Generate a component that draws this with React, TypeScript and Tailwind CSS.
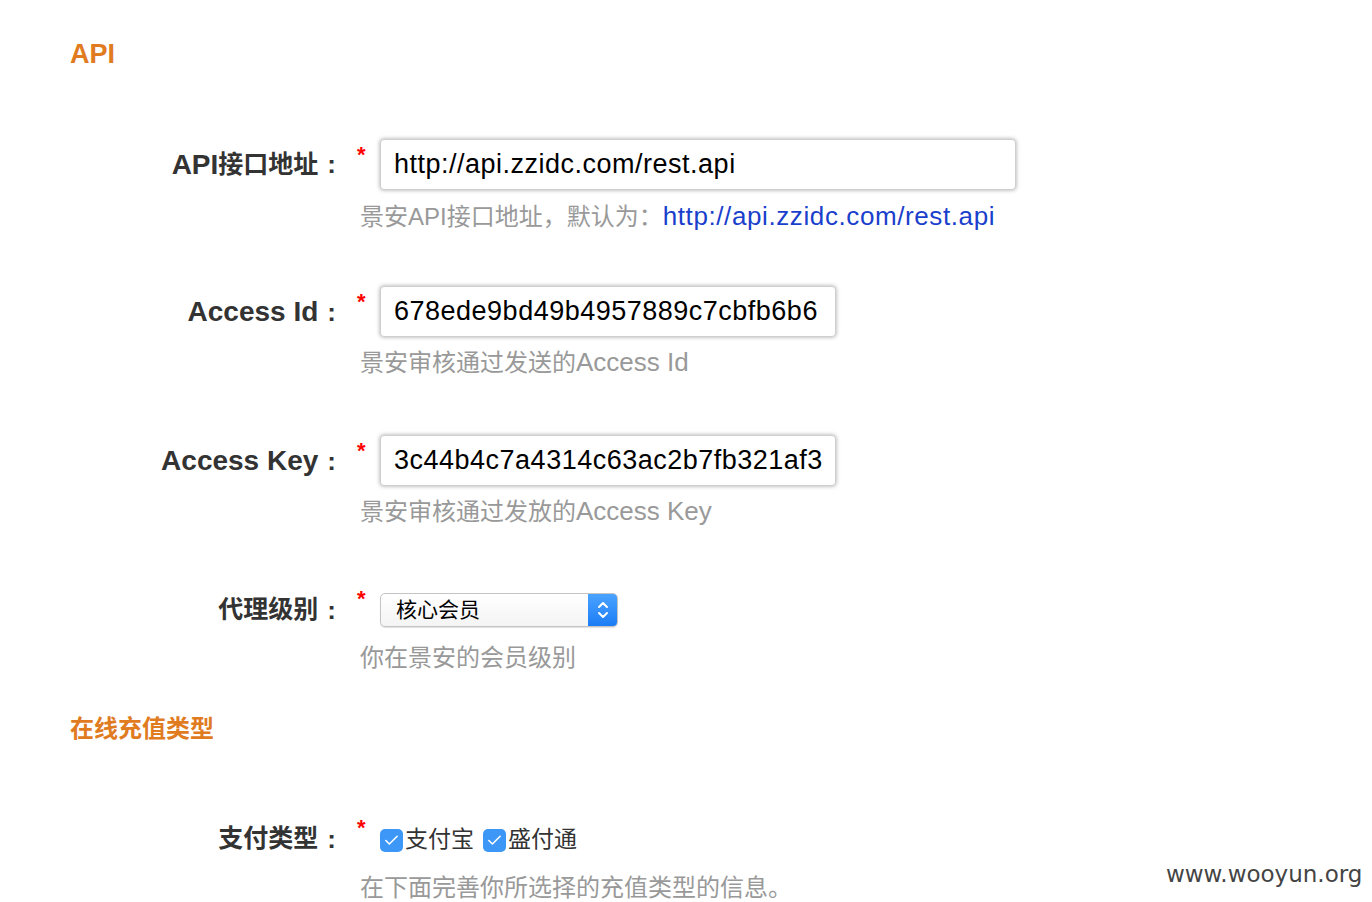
import { Check } from 'lucide-react';

const font = 'font-["Liberation_Sans","Noto_Sans_CJK_SC",sans-serif]';

const Star = ({ up }: { up?: boolean }) => (
  <span
    className={`w-[23px] shrink-0 text-[22px] font-bold leading-none text-[#ff0000] ${up ? '-mt-[5px]' : 'mt-[5px]'}`}
  >
    *
  </span>
);

const Help = ({ children }: { children: React.ReactNode }) => (
  <p className="pl-[3px] text-[24px] leading-[30px] text-[#999999]">{children}</p>
);

const TextInput = ({ value, width }: { value: string; width: string }) => (
  <input
    readOnly
    defaultValue={value}
    className={`${width} h-[51px] rounded-[4px] border border-[#cfcfcf] bg-white px-[13px] text-[27px] tracking-[0.5px] text-black shadow-[0_0_4px_rgba(0,0,0,0.35)] outline-none`}
  />
);

const Label = ({ latin, cjk, h }: { latin?: string; cjk?: string; h: string }) => (
  <div className={`flex w-[336px] shrink-0 items-center justify-end font-bold text-[#333333] ${h}`}>
    {latin && <span className="text-[28px]">{latin}</span>}
    {cjk && <span className="text-[25px]">{cjk}</span>}
    <span className="ml-[9px] text-[26px]">:</span>
  </div>
);

const CheckBox = ({ label }: { label: string }) => (
  <label className="flex items-center">
    <span className="mt-[3px] flex h-[23px] w-[23px] items-center justify-center rounded-[5px] bg-[#3d97f7]">
      <Check size={17} strokeWidth={2.2} className="text-white" />
    </span>
    <span className="ml-[2px] text-[23px] text-[#333333]">{label}</span>
  </label>
);

export default function App() {
  return (
    <div className={`relative min-h-[902px] bg-white ${font}`}>
      <div className="pt-[38px]">
        <h2 className="pl-[70px] text-[27px] font-bold leading-[32px] text-[#e07b1f]">API</h2>

        {/* API接口地址 */}
        <div className="mt-[69px] flex">
          <Label latin="API" cjk="接口地址" h="h-[51px]" />
          <div className="ml-[21px] flex flex-col">
            <div className="flex items-start">
              <Star />
              <TextInput value="http://api.zzidc.com/rest.api" width="w-[636px]" />
            </div>
            <div className="mt-[11px]">
              <Help>
                景安API接口地址，默认为：
                <a className="text-[26px] tracking-[0.6px] text-[#1a3fcc]">http://api.zzidc.com/rest.api</a>
              </Help>
            </div>
          </div>
        </div>

        {/* Access Id */}
        <div className="mt-[54px] flex">
          <Label latin="Access Id" h="h-[52px]" />
          <div className="ml-[21px] flex flex-col">
            <div className="flex items-start">
              <Star />
              <TextInput value="678ede9bd49b4957889c7cbfb6b6" width="w-[456px]" />
            </div>
            <div className="mt-[10px]">
              <Help>
                景安审核通过发送的<span className="text-[26px]">Access Id</span>
              </Help>
            </div>
          </div>
        </div>

        {/* Access Key */}
        <div className="mt-[57px] flex">
          <Label latin="Access Key" h="h-[52px]" />
          <div className="ml-[21px] flex flex-col">
            <div className="flex items-start">
              <Star />
              <TextInput value="3c44b4c7a4314c63ac2b7fb321af3e2d" width="w-[456px]" />
            </div>
            <div className="mt-[10px]">
              <Help>
                景安审核通过发放的<span className="text-[26px]">Access Key</span>
              </Help>
            </div>
          </div>
        </div>

        {/* 代理级别 */}
        <div className="mt-[66px] flex">
          <Label cjk="代理级别" h="h-[34px]" />
          <div className="ml-[21px] flex flex-col">
            <div className="flex items-start">
              <Star up />
              <div className="flex h-[34px] w-[238px] overflow-hidden rounded-[5px] border border-[#c4c4c4] bg-gradient-to-b from-white to-[#f4f4f4] shadow-[0_1px_1px_rgba(0,0,0,0.12)]">
                <span className="flex-1 pl-[15px] text-[21px] leading-[32px] text-black">核心会员</span>
                <span className="flex w-[29px] items-center justify-center bg-gradient-to-b from-[#4aa3ff] to-[#1a7cf5]">
                  <svg width="12" height="22" viewBox="0 0 12 22" fill="none" stroke="white" strokeWidth="2" strokeLinecap="round" strokeLinejoin="round">
                    <path d="M2 8 L6 4 L10 8" />
                    <path d="M2 14 L6 18 L10 14" />
                  </svg>
                </span>
              </div>
            </div>
            <div className="mt-[16px]">
              <Help>你在景安的会员级别</Help>
            </div>
          </div>
        </div>

        <h2 className="mt-[40px] pl-[70px] text-[24px] font-bold leading-[32px] text-[#e07b1f]">在线充值类型</h2>

        {/* 支付类型 */}
        <div className="mt-[77px] flex">
          <Label cjk="支付类型" h="h-[34px]" />
          <div className="ml-[21px] flex flex-col">
            <div className="flex items-start">
              <Star up />
              <div className="flex h-[34px] items-center gap-[9px]">
                <CheckBox label="支付宝" />
                <CheckBox label="盛付通" />
              </div>
            </div>
            <div className="mt-[17px]">
              <Help>在下面完善你所选择的充值类型的信息。</Help>
            </div>
          </div>
        </div>
      </div>

      <span className='absolute left-[1166px] top-[857px] font-["DejaVu_Sans",sans-serif] text-[23px] text-[#444444]'>
        www.wooyun.org
      </span>
    </div>
  );
}
